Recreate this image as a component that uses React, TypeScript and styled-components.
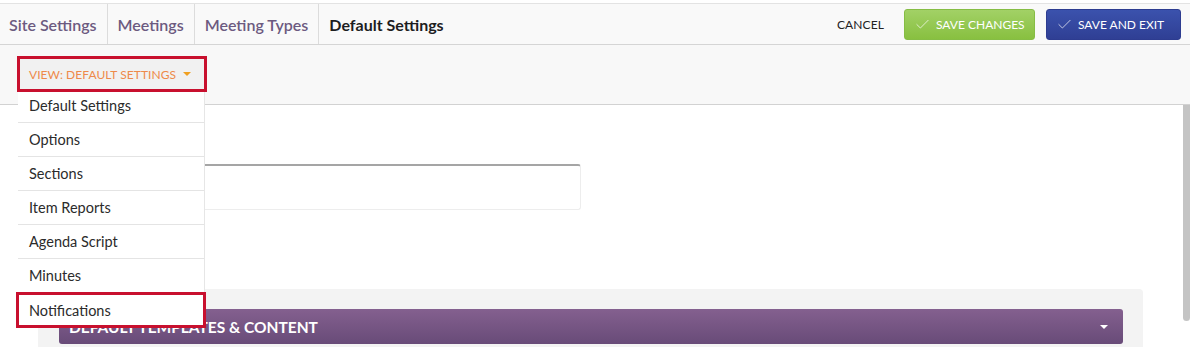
import styled, { createGlobalStyle } from 'styled-components';
import { Check } from 'lucide-react';

const GlobalStyle = createGlobalStyle`
  html, body {
    margin: 0;
    padding: 0;
    background: #ffffff;
    font-family: Lato, "Open Sans", "Liberation Sans", sans-serif;
    overflow: hidden;
  }
  * {
    box-sizing: border-box;
  }
`;

const Page = styled.div`
  width: 1190px;
  height: 347px;
  padding-top: 3px;
  background: #ffffff;
`;

const TopBar = styled.header`
  display: flex;
  justify-content: space-between;
  align-items: stretch;
  height: 42px;
  background: #f9f9f9;
  border-top: 1px solid #e3e3e3;
  border-bottom: 1px solid #d5d5d5;
`;

const Crumbs = styled.nav`
  display: flex;
  align-items: stretch;
`;

const Crumb = styled.a<{ $current?: boolean }>`
  display: flex;
  align-items: center;
  padding: 0 10px;
  font-size: 16px;
  font-weight: ${(p) => (p.$current ? 700 : 600)};
  color: ${(p) => (p.$current ? '#1d1d1f' : '#6c5a80')};
  border-right: ${(p) => (p.$current ? 'none' : '1px solid #dcdcdc')};
  text-decoration: none;
  cursor: pointer;

  &:first-child {
    padding-left: 9px;
  }
`;

const Actions = styled.div`
  display: flex;
  align-items: center;
  gap: 11px;
  padding-right: 9px;
`;

const CancelButton = styled.button`
  background: none;
  border: none;
  padding: 0;
  margin-right: 9px;
  font-family: inherit;
  font-size: 12px;
  color: #222;
  letter-spacing: 0.1px;
  cursor: pointer;
`;

const ActionButton = styled.button<{ $variant: 'green' | 'blue'; $width: number }>`
  display: flex;
  align-items: center;
  gap: 5px;
  width: ${(p) => p.$width}px;
  height: 31px;
  padding: 0 0 0 9px;
  border-radius: 3px;
  border: 1px solid ${(p) => (p.$variant === 'green' ? '#86bd45' : '#2d3c90')};
  background: ${(p) =>
    p.$variant === 'green'
      ? 'linear-gradient(#a2d166, #88c040)'
      : 'linear-gradient(#3b52ad, #2f3f94)'};
  color: #ffffff;
  font-family: inherit;
  font-size: 12px;
  cursor: pointer;

  svg {
    opacity: 0.9;
  }
`;

const SubBar = styled.div`
  height: 60px;
  padding: 11px 0 0 17px;
  background: #f8f8f8;
  border-bottom: 1px solid #d2d2d2;
`;

const ViewPicker = styled.div`
  position: relative;
  width: 190px;
`;

const ViewToggle = styled.button`
  position: relative;
  z-index: 6;
  display: flex;
  align-items: center;
  justify-content: space-between;
  width: 190px;
  height: 36px;
  padding: 0 13px 0 9px;
  border: 3px solid #c8102e;
  background: #f1f1f1;
  font-family: inherit;
  font-size: 12px;
  color: #ee8a4a;
  letter-spacing: 0.05px;
  cursor: pointer;
`;

const Caret = styled.span<{ $color: string }>`
  width: 0;
  height: 0;
  border-left: 4px solid transparent;
  border-right: 4px solid transparent;
  border-top: 4px solid ${(p) => p.$color};
`;

const Menu = styled.ul`
  position: absolute;
  top: 33px;
  left: 1px;
  z-index: 5;
  width: 187px;
  margin: 0;
  padding: 0;
  list-style: none;
  background: #ffffff;
  border-right: 1px solid #e6e6e6;
`;

const MenuItem = styled.li<{ $marked?: boolean }>`
  display: flex;
  align-items: center;
  height: 34px;
  padding-left: 11px;
  font-size: 14.5px;
  color: #2b2b2b;
  border-bottom: 1px solid #e4e4e4;
  cursor: pointer;

  ${(p) =>
    p.$marked &&
    `
    border-bottom: none;
    outline: 3px solid #c8102e;
    outline-offset: -2px;
    margin: 0 -1px;
    padding-left: 12px;
  `}
`;

const Body = styled.div`
  display: flex;
  height: 242px;
  overflow: hidden;
`;

const Content = styled.main`
  flex: 1;
  padding: 59px 40px 20px 38px;
`;

const ScrollTrack = styled.div`
  flex-shrink: 0;
  width: 7px;
  background: #ffffff;
`;

const ScrollThumb = styled.div`
  height: 216px;
  background: #c4c4c4;
  border-radius: 0 0 4px 4px;
`;

const NameInput = styled.input`
  display: block;
  width: 543px;
  height: 46px;
  border: 1px solid #ededed;
  border-top: 2px solid #a5a5a5;
  border-radius: 3px;
  background: #ffffff;
`;

const Panel = styled.section`
  margin-top: 79px;
  padding: 20px 20px 20px 21px;
  background: #f3f3f3;
  border-radius: 4px;
`;

const PanelHeader = styled.div`
  display: flex;
  align-items: center;
  justify-content: space-between;
  height: 35px;
  padding: 0 15px 0 10px;
  border-radius: 3px;
  background: linear-gradient(#84608f, #684b78);
  color: #ffffff;
  font-size: 15.5px;
  font-weight: 700;
`;

const menuItems = ['Default Settings', 'Options', 'Sections', 'Item Reports', 'Agenda Script', 'Minutes', 'Notifications'];

export default function App() {
  return (
    <>
      <GlobalStyle />
      <Page>
        <TopBar>
          <Crumbs>
            <Crumb>Site Settings</Crumb>
            <Crumb>Meetings</Crumb>
            <Crumb>Meeting Types</Crumb>
            <Crumb $current>Default Settings</Crumb>
          </Crumbs>
          <Actions>
            <CancelButton>CANCEL</CancelButton>
            <ActionButton $variant="green" $width={131}>
              <Check size={17} strokeWidth={1.1} />
              SAVE CHANGES
            </ActionButton>
            <ActionButton $variant="blue" $width={135}>
              <Check size={17} strokeWidth={1.1} />
              SAVE AND EXIT
            </ActionButton>
          </Actions>
        </TopBar>
        <SubBar>
          <ViewPicker>
            <ViewToggle>
              VIEW: DEFAULT SETTINGS
              <Caret $color="#f0a020" />
            </ViewToggle>
            <Menu>
              {menuItems.map((item) => (
                <MenuItem key={item} $marked={item === 'Notifications'}>
                  {item}
                </MenuItem>
              ))}
            </Menu>
          </ViewPicker>
        </SubBar>
        <Body>
          <Content>
            <NameInput />
            <Panel>
              <PanelHeader>
                DEFAULT TEMPLATES &amp; CONTENT
                <Caret $color="#ffffff" />
              </PanelHeader>
            </Panel>
          </Content>
          <ScrollTrack>
            <ScrollThumb />
          </ScrollTrack>
        </Body>
      </Page>
    </>
  );
}
